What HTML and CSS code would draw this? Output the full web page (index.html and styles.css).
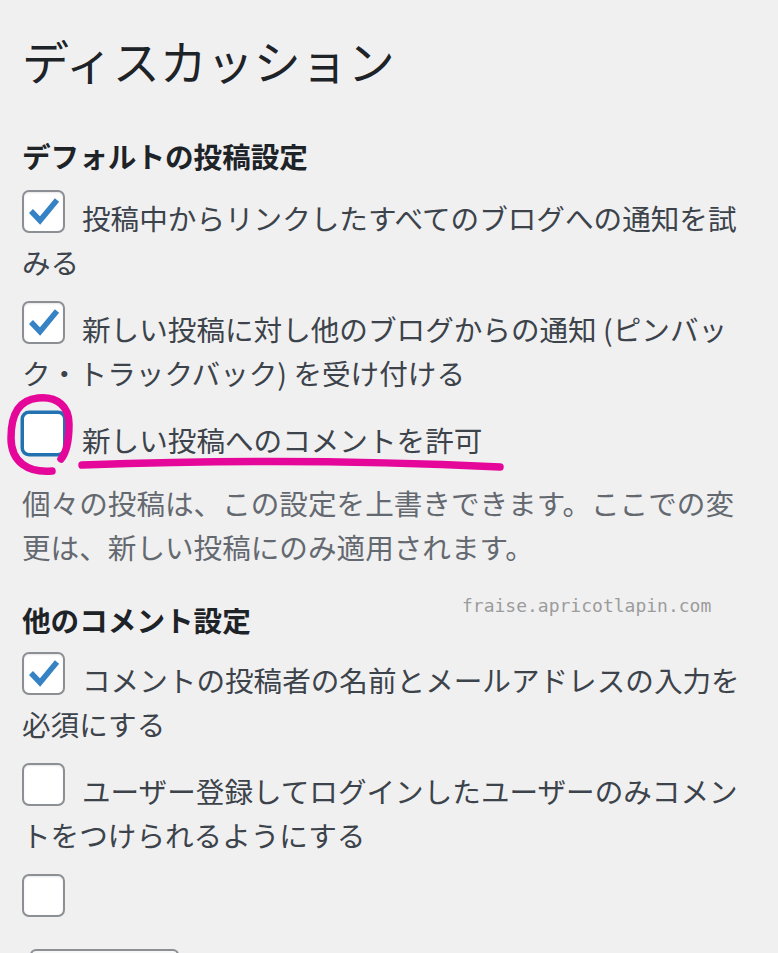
FILE: index.html
```html
<!DOCTYPE html>
<html lang="ja">
<head>
  <meta charset="UTF-8" />
  <meta name="viewport" content="width=device-width, initial-scale=1.0"/>
  <title>ディスカッション設定</title>
  <link rel="stylesheet" href="styles.css">
</head>
<body>

  <div class="wrap">
    <h1>ディスカッション</h1>

    <h2>デフォルトの投稿設定</h2>

    <label class="opt"><span class="box"><svg viewBox="0 0 43 43"><path d="M9 21 L18 30.5 L35 10"/></svg></span>投稿中からリンクしたすべてのブログへの通知を試みる</label>

    <label class="opt"><span class="box"><svg viewBox="0 0 43 43"><path d="M9 21 L18 30.5 L35 10"/></svg></span>新しい投稿に対し他のブログからの通知 (ピンバック・トラックバック) を受け付ける</label>

    <label class="opt"><span class="box focus"></span>新しい投稿へのコメントを許可</label>

    <p class="desc">個々の投稿は、この設定を上書きできます。ここでの変更は、新しい投稿にのみ適用されます。</p>

    <h2 class="second">他のコメント設定</h2>

    <label class="opt"><span class="box"><svg viewBox="0 0 43 43"><path d="M9 21 L18 30.5 L35 10"/></svg></span>コメントの投稿者の名前とメールアドレスの入力を必須にする</label>

    <label class="opt"><span class="box"></span>ユーザー登録してログインしたユーザーのみコメントをつけられるようにする</label>

    <label class="opt"><span class="box"></span></label>

    <div class="field"></div>
  </div>

  <!-- watermark and hand-drawn marks lie over the page -->
  <div class="watermark">fraise.apricotlapin.com</div>
  <svg class="marks" width="778" height="953" viewBox="0 0 778 953">
    <path d="M52 471 C 28 473 11 462 11 438 C 11 414 19 400 38 398 C 58 396 69 407 69 424 C 69 440 67 452 61 459"/>
    <path d="M82 465 C 200 461 330 459 500 467"/>
  </svg>

</body>
</html>
```

FILE: styles.css
```css
body {
  margin: 0;
  background: #f0f0f1;
  font-family: "Noto Sans CJK JP", "Noto Sans", sans-serif;
  color: #3c434a;
  overflow: hidden;
  height: 953px;
  position: relative;
}
.wrap {
  padding: 29px 22px 0 22px;
}
h1 {
  font-size: 47px;
  font-weight: 400;
  line-height: 61px;
  color: #1d2327;
  margin: 0 0 46px 0;
}
h2 {
  font-size: 28.6px;
  font-weight: 700;
  line-height: 40px;
  color: #1d2327;
  margin: 0 0 14px 0;
}
h2.second {
  margin: 31px 0 12px 0;
}
.opt {
  display: block;
  font-size: 28.6px;
  line-height: 44px;
  margin-bottom: 17px;
}
.box {
  display: inline-block;
  box-sizing: border-box;
  width: 43px;
  height: 43px;
  margin-right: 17px;
  vertical-align: -3px;
  background: #fff;
  border: 2px solid #8c8f94;
  border-radius: 7px;
  box-shadow: inset 0 1px 2px rgba(0, 0, 0, 0.1);
}
.box svg {
  display: block;
  width: 43px;
  height: 43px;
  margin: -2px;
}
.box path {
  fill: none;
  stroke: #3582c4;
  stroke-width: 5.5;
  stroke-linecap: butt;
  stroke-linejoin: miter;
}
.box.focus {
  border-color: #2271b1;
  box-shadow: 0 0 0 1.5px #2271b1;
}
.desc {
  font-size: 28.6px;
  line-height: 44px;
  color: #646970;
  margin: 19px 0 0 0;
}
.field {
  margin: 25px 0 0 8px;
  width: 145px;
  height: 40px;
  border: 2px solid #8c8f94;
  border-radius: 6px;
  background: #f6f7f7;
}
.watermark {
  position: absolute;
  left: 462px;
  top: 595px;
  font-family: "DejaVu Sans Mono", monospace;
  font-size: 18px;
  color: #9c9c9c;
}
.marks {
  position: absolute;
  left: 0;
  top: 0;
  pointer-events: none;
}
.marks path {
  fill: none;
  stroke: #e5079a;
  stroke-width: 7.5;
  stroke-linecap: round;
  stroke-linejoin: round;
}
```
